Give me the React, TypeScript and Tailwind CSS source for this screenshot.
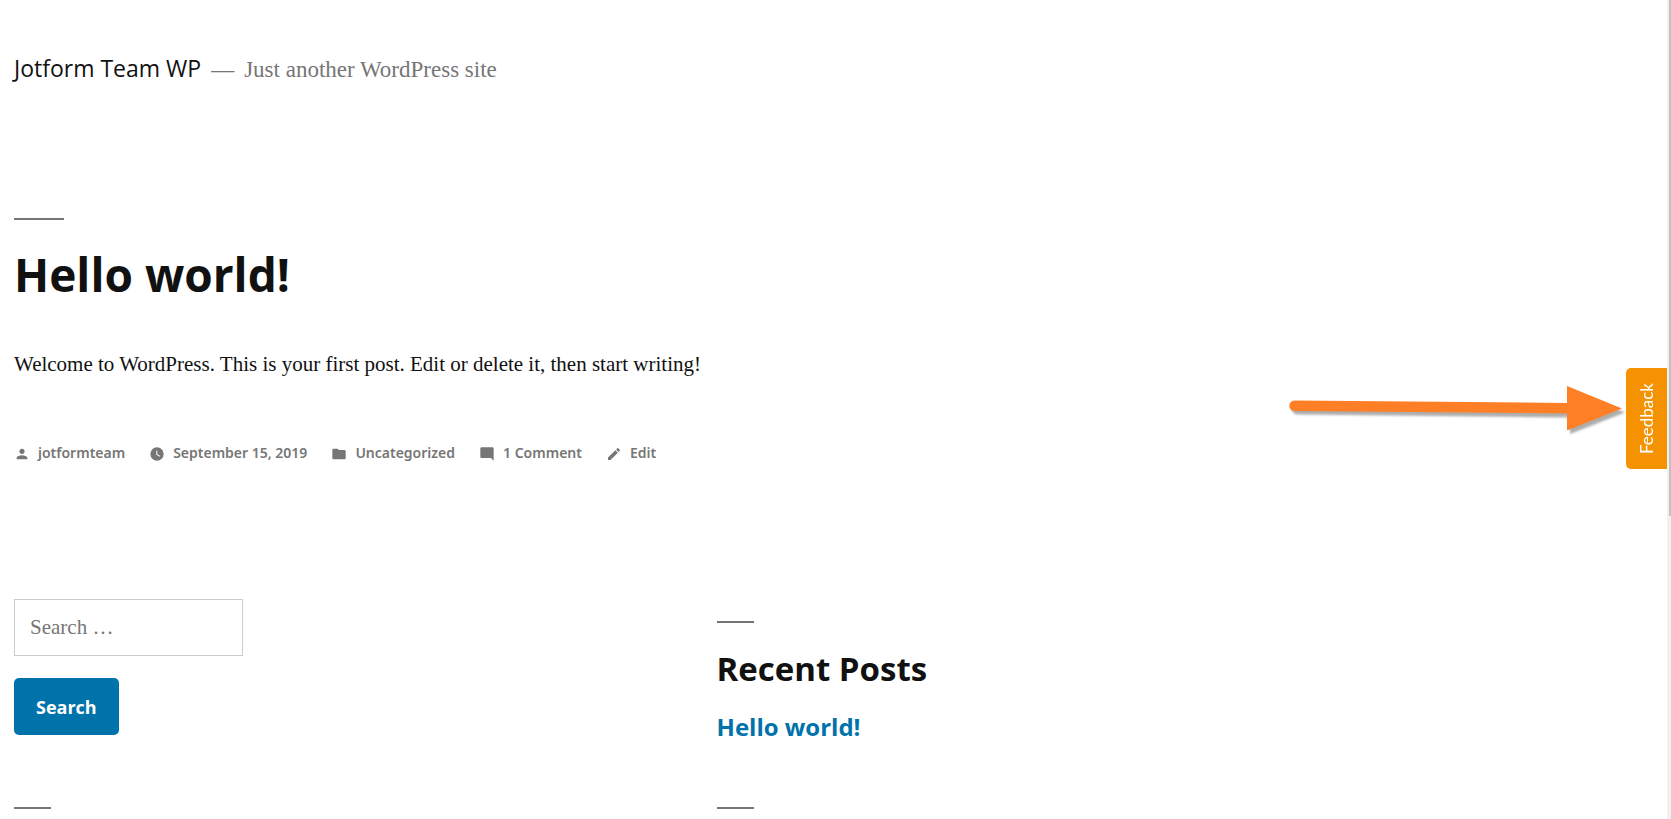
import type { ReactNode } from "react";

function Rule({ wide = false }: { wide?: boolean }) {
  return <div aria-hidden="true" className={wide ? "h-0.5 w-[50px] bg-[#767676]" : "h-0.5 w-[37px] bg-[#767676]"} />;
}

function Meta({ path, children }: { path: ReactNode; children: string }) {
  return (
    <a href="#" className="flex items-center gap-2">
      <svg viewBox="0 0 24 24" className="mt-0.5 size-4" fill="currentColor" aria-hidden="true">
        {path}
      </svg>
      {children}
    </a>
  );
}

function Header() {
  return (
    <header className="flex items-baseline gap-2.5 pt-[50px]">
      <a href="#" className="font-['Open_Sans',sans-serif] text-[23px] leading-9 text-[#111]">
        Jotform Team WP
      </a>
      <p className="flex items-baseline gap-2.5 text-[23px] leading-9 text-[#767676]">
        <span>—</span>
        <span>Just another WordPress site</span>
      </p>
    </header>
  );
}

function Post() {
  return (
    <article className="pt-[130px]">
      <Rule wide />
      <h1 className="pt-[22px] font-['Open_Sans',sans-serif] text-[46px] leading-[64px] font-bold text-[#111]">Hello world!</h1>
      <p className="pt-10 text-[21px] leading-9 text-[#111]">
        Welcome to WordPress. This is your first post. Edit or delete it, then start writing!
      </p>
      <footer className="flex gap-6 pt-[59px] font-['Noto_Sans',sans-serif] text-sm leading-6 font-semibold text-[#767676]">
        <Meta path={<path d="M12 12c2.21 0 4-1.79 4-4s-1.79-4-4-4-4 1.79-4 4 1.79 4 4 4zm0 2c-2.67 0-8 1.34-8 4v2h16v-2c0-2.66-5.33-4-8-4z" />}>
          jotformteam
        </Meta>
        <Meta path={<path d="M12 2a10 10 0 1 0 0 20 10 10 0 0 0 0-20zm4.2 14.2L11 13V7h1.500v5.200l4.500 2.700-.8 1.300z" />}>
          September 15, 2019
        </Meta>
        <Meta path={<path d="M10 4H4c-1.100 0-2 .9-2 2v12c0 1.100.9 2 2 2h16c1.100 0 2-.9 2-2V8c0-1.100-.9-2-2-2h-8l-2-2z" />}>
          Uncategorized
        </Meta>
        <Meta path={<path d="M22 4c0-1.100-.9-2-2-2H4c-1.100 0-2 .9-2 2v12c0 1.100.9 2 2 2h14l4 4V4z" />}>
          1 Comment
        </Meta>
        <Meta path={<path d="M3 17.250V21h3.750L17.810 9.940l-3.750-3.750L3 17.250zM20.710 7.040a1 1 0 0 0 0-1.410l-2.340-2.340a1 1 0 0 0-1.410 0l-1.830 1.830 3.750 3.750 1.830-1.830z" />}>
          Edit
        </Meta>
      </footer>
    </article>
  );
}

function Widgets() {
  return (
    <aside className="grid grid-cols-[17fr_23fr] pt-[134px]">
      <form className="flex flex-col items-start gap-[22px]" onSubmit={(e) => e.preventDefault()}>
        <input
          type="search"
          aria-label="Search for"
          placeholder="Search …"
          className="h-[57px] w-[229px] border border-[#ccc] px-[15px] text-[21px] placeholder:text-[#767676]"
        />
        <button className="h-[57px] rounded-[5px] bg-[#0073aa] px-[22px] font-['Open_Sans',sans-serif] text-lg font-bold text-white">
          Search
        </button>
      </form>
      <section className="pt-[22px]">
        <Rule />
        <h2 className="pt-[22px] font-['Open_Sans',sans-serif] text-[33px] leading-12 font-bold text-[#111]">Recent Posts</h2>
        <ul className="pt-4">
          <li>
            <a href="#" className="font-['Open_Sans',sans-serif] text-2xl leading-9 font-bold text-[#0073aa]">
              Hello world!
            </a>
          </li>
        </ul>
      </section>
      <div className="pt-[62px]">
        <Rule />
      </div>
      <div className="pt-[62px]">
        <Rule />
      </div>
    </aside>
  );
}

function Pointer() {
  return (
    <svg viewBox="0 0 345 60" className="absolute top-[380px] right-[42px] h-[60px] w-[345px]" aria-hidden="true">
      <defs>
        <filter id="soft" x="-5%" y="-20%" width="110%" height="150%">
          <feGaussianBlur stdDeviation="1" />
        </filter>
      </defs>
      <g transform="translate(3 4)" fill="#777" opacity="0.6" filter="url(#soft)">
        <path d="M10 20 283 23V6l55 22.500L283 50V33.500L10 30.500a5 5 0 0 1 0-10z" />
      </g>
      <path fill="#ff7f27" d="M10.500 20.500 283 23V6l55 22.500L283 50.500V33.500L10.500 31a5 5 0 0 1 0-10.500z" />
    </svg>
  );
}

export default function App() {
  return (
    <div className="relative flex h-screen overflow-hidden bg-white font-['Liberation_Serif',serif]">
      <main className="min-w-0 flex-1 pl-3.5">
        <Header />
        <Post />
        <Widgets />
      </main>
      <div className="flex w-1 justify-end bg-[#f1f1f1]" aria-hidden="true">
        <div className="h-[63%] w-0.5 bg-[#c1c1c1]" />
      </div>
      <Pointer />
      <button className="absolute top-[368px] right-1 flex h-[101px] w-[41px] items-center justify-center rounded-l-[5px] bg-[#f59202] font-['Lato',sans-serif] text-[17px] text-white">
        <span className="rotate-180 [writing-mode:vertical-rl]">Feedback</span>
      </button>
    </div>
  );
}
